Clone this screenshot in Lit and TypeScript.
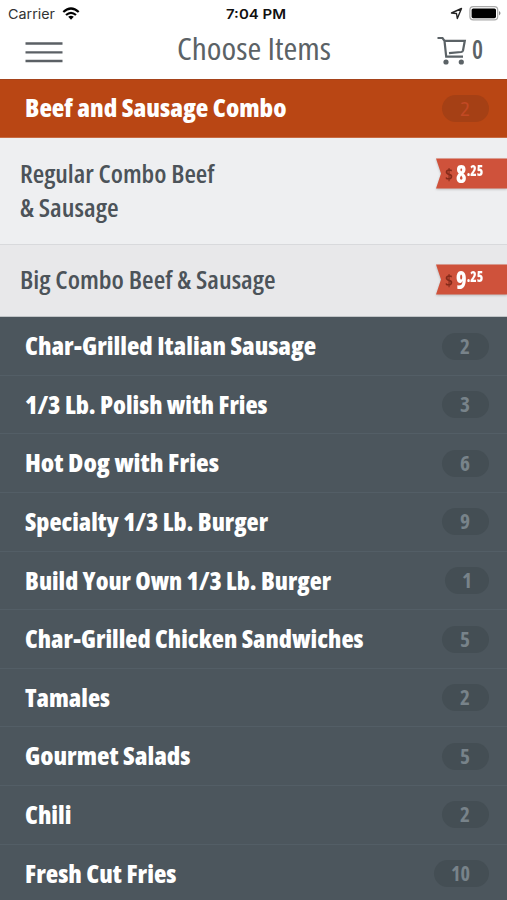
import { LitElement, html, css, svg } from "lit";
import { customElement, property } from "lit/decorators.js";

/** One line of text condensed to a given width. */
@customElement("fit-text")
class FitText extends LitElement {
  @property() text = "";
  @property({ type: Number }) width = 100;
  @property({ type: Number }) height = 34;
  @property({ type: Number }) baseline = 25.4;
  static styles = css`
    :host { display: block; flex: none; }
    .line { display: block; overflow: visible; }
    text { fill: currentColor; }
  `;
  render() {
    return html`<svg class="line" width=${this.width} height=${this.height}>
      ${svg`<text x="0" y=${this.baseline} textLength=${this.width} lengthAdjust="spacingAndGlyphs">${this.text}</text>`}
    </svg>`;
  }
}

@customElement("menu-row")
class MenuRow extends LitElement {
  @property() label = "";
  @property() count = "";
  @property({ type: Number }) width = 100;
  static styles = css`
    :host {
      display: flex; box-sizing: border-box; height: 58.62px; flex: none;
      justify-content: space-between; align-items: flex-start;
      padding: 15.5px 18.5px 0 24.5px; color: #fff;
      border-bottom: 1px solid #535e66;
      font: 800 25px "Open Sans", "Noto Sans", sans-serif; font-stretch: 75%;
    }
    :host([active]) { border-color: #c76b43; border-top: 1px solid #a5431b; padding-top: 14.5px; }
    .name { margin-top: -2.5px; }
    .badge {
      box-sizing: border-box; height: 27px; min-width: 46.5px; border-radius: 13.5px;
      padding: 0 18.5px 0 17.5px; background: #444e54; color: #78838a;
      display: flex; justify-content: center; font-size: 20.5px; font-weight: 700;
    }
    .badge.one { min-width: 44px; padding: 0 17px; }
    :host([active]) .badge { background: #a54015; color: #c24924; font-weight: 500; }
  `;
  render() {
    const wide = this.count.length > 1;
    return html`
      <fit-text class="name" .text=${this.label} .width=${this.width}></fit-text>
      <div class="badge ${this.count === "1" ? "one" : ""}">
        <fit-text .text=${this.count} .width=${wide ? 19 : 10} .height=${26} .baseline=${21.3}></fit-text>
      </div>`;
  }
}

@customElement("price-tag")
class PriceTag extends LitElement {
  @property() dollars = "";
  static styles = css`
    :host { display: block; filter: drop-shadow(0 1px 1px #0003); }
    .tag { display: block; overflow: visible; font-family: "Open Sans", "Noto Sans", sans-serif; font-stretch: 75%; }
    .ribbon { fill: #cf523b; }
    .sign { fill: #852b1a; font-size: 16.5px; font-weight: 700; }
    .whole { fill: #fff; font-size: 25px; font-weight: 800; }
    .cents { fill: #fff; font-size: 16.5px; font-weight: 800; }
  `;
  render() {
    return html`<svg class="tag" width="71" height="31">
      <path class="ribbon" d="M0 .5H71V30.5H0L5 15.5Z" />
      <text class="sign" x="9" y="21.5" textLength="8" lengthAdjust="spacingAndGlyphs">$</text>
      <text class="whole" x="20" y="24.7" textLength="10.5" lengthAdjust="spacingAndGlyphs">${this.dollars}</text>
      <text class="cents" x="30.8" y="18.3" textLength="16.5" lengthAdjust="spacingAndGlyphs">.25</text>
    </svg>`;
  }
}

@customElement("app-root")
class AppRoot extends LitElement {
  static styles = css`
    :host {
      display: flex; flex-direction: column; width: 507px; height: 900px; overflow: hidden;
      background: #4c565d; font-family: "Open Sans", "Noto Sans", sans-serif; font-stretch: 75%;
    }
    .status {
      display: grid; grid-template-columns: 1fr auto 1fr; align-items: center; flex: none;
      height: 27px; padding: 0 6px 0 8px; background: #fff; color: #111;
      font-family: Inter, "Liberation Sans", sans-serif; font-size: 13px; font-stretch: 100%;
    }
    .left, .right { display: flex; align-items: center; }
    .left { gap: 7px; color: #333; }
    .right { justify-content: flex-end; gap: 6px; }
    .time { font-weight: 600; margin-left: 3px; }
    .bar {
      display: grid; grid-template-columns: 1fr auto 1fr; flex: none; height: 52px;
      background: #fff; color: #5b6266;
    }
    .burger { margin: 14px 0 0 25px; }
    .title { font-size: 31.5px; font-weight: 400; }
    .cart { display: flex; justify-content: flex-end; padding-right: 24px; gap: 5px; font-size: 26.5px; font-weight: 600; }
    .basket { margin-top: 9px; }
    .active { background: #b94614; }
    .item {
      display: flex; justify-content: space-between; box-sizing: border-box; flex: none;
      padding-left: 20px; color: #4c5359; font-size: 25.5px; font-weight: 560;
    }
    .regular { height: 107.5px; background: #eeeff1; padding-top: 20px; border-bottom: 1px solid #d8d9dc; }
    .big { height: 72px; background: #e8e8ea; padding-top: 19px; border-bottom: 1px solid #c0c4c7; }
    .lines { display: flex; flex-direction: column; }
    svg { display: block; overflow: visible; }
  `;
  private rows: [string, string, number][] = [
    ["Char-Grilled Italian Sausage", "2", 291],
    ["1/3 Lb. Polish with Fries", "3", 242.5],
    ["Hot Dog with Fries", "6", 194],
    ["Specialty 1/3 Lb. Burger", "9", 243],
    ["Build Your Own 1/3 Lb. Burger", "1", 306],
    ["Char-Grilled Chicken Sandwiches", "5", 338.5],
    ["Tamales", "2", 85],
    ["Gourmet Salads", "5", 165.5],
    ["Chili", "2", 46.5],
    ["Fresh Cut Fries", "10", 151.5],
  ];
  render() {
    return html`
      <div class="status">
        <div class="left">
          <fit-text text="Carrier" .width=${47} .height=${18} .baseline=${14}></fit-text>
          <svg width="18" height="13" viewBox="0 0 18 13" fill="none" stroke="#000" stroke-width="2.2">
            <path d="M1.3 5Q9-2 16.7 5" /><path d="M4 8Q9 3.6 14 8" />
            <path d="M6.2 9.8Q9 7.6 11.8 9.8L9 12.7Z" fill="#000" stroke="none" />
          </svg>
        </div>
        <fit-text class="time" text="7:04 PM" .width=${60} .height=${18} .baseline=${14}></fit-text>
        <div class="right">
          <svg width="13" height="13" viewBox="0 0 13 13"><path d="M1.5 6 11.5 1.5 7.3 11.5 6.5 6.5Z" fill="none" stroke="#222" stroke-width="1.4" stroke-linejoin="round" /></svg>
          <svg width="32" height="15" viewBox="0 0 32 15">
            <rect x=".9" y=".7" width="27.8" height="13.2" rx="3.3" fill="#fff" stroke="#aaa" stroke-width="1.2" />
            <rect x="2.6" y="2.4" width="24.4" height="9.8" rx="1.6" fill="#000" />
            <path d="M30 5Q33 7.2 30 9.5Z" fill="#888" />
          </svg>
        </div>
      </div>
      <div class="bar">
        <svg class="burger" width="38" height="24"><path d="M.5 2.5H37.5M.5 11.3H37.5M.5 20H37.5" stroke="#5b6065" stroke-width="2.3" /></svg>
        <fit-text class="title" text="Choose Items" .width=${154} .height=${44} .baseline=${32.7}></fit-text>
        <div class="cart">
          <svg class="basket" width="30" height="30" viewBox="0 0 30 30" fill="none" stroke="#5b6266" stroke-width="2.2">
            <path d="M.5 2H5.5L7.5 4.8 9.2 20.7H26" />
            <path d="M7.5 4.8H27.8L26 14.5Q25.7 15.8 24.2 16L12 17.2" />
            <g fill="#5b6266" stroke="none"><circle cx="9" cy="26" r="2.6" /><circle cx="24.3" cy="26" r="2.6" /></g>
          </svg>
          <fit-text text="0" .width=${11} .height=${44} .baseline=${31.5}></fit-text>
        </div>
      </div>
      <menu-row class="active" active label="Beef and Sausage Combo" count="2" .width=${261.5}></menu-row>
      <div class="item regular">
        <div class="lines">
          <fit-text text="Regular Combo Beef" .width=${194.5}></fit-text>
          <fit-text text="&amp; Sausage" .width=${98.5}></fit-text>
        </div>
        <price-tag dollars="8"></price-tag>
      </div>
      <div class="item big">
        <fit-text text="Big Combo Beef &amp; Sausage" .width=${255.5}></fit-text>
        <price-tag dollars="9"></price-tag>
      </div>
      ${this.rows.map(([label, count, width]) => html`<menu-row .label=${label} .count=${count} .width=${width}></menu-row>`)}
    `;
  }
}
